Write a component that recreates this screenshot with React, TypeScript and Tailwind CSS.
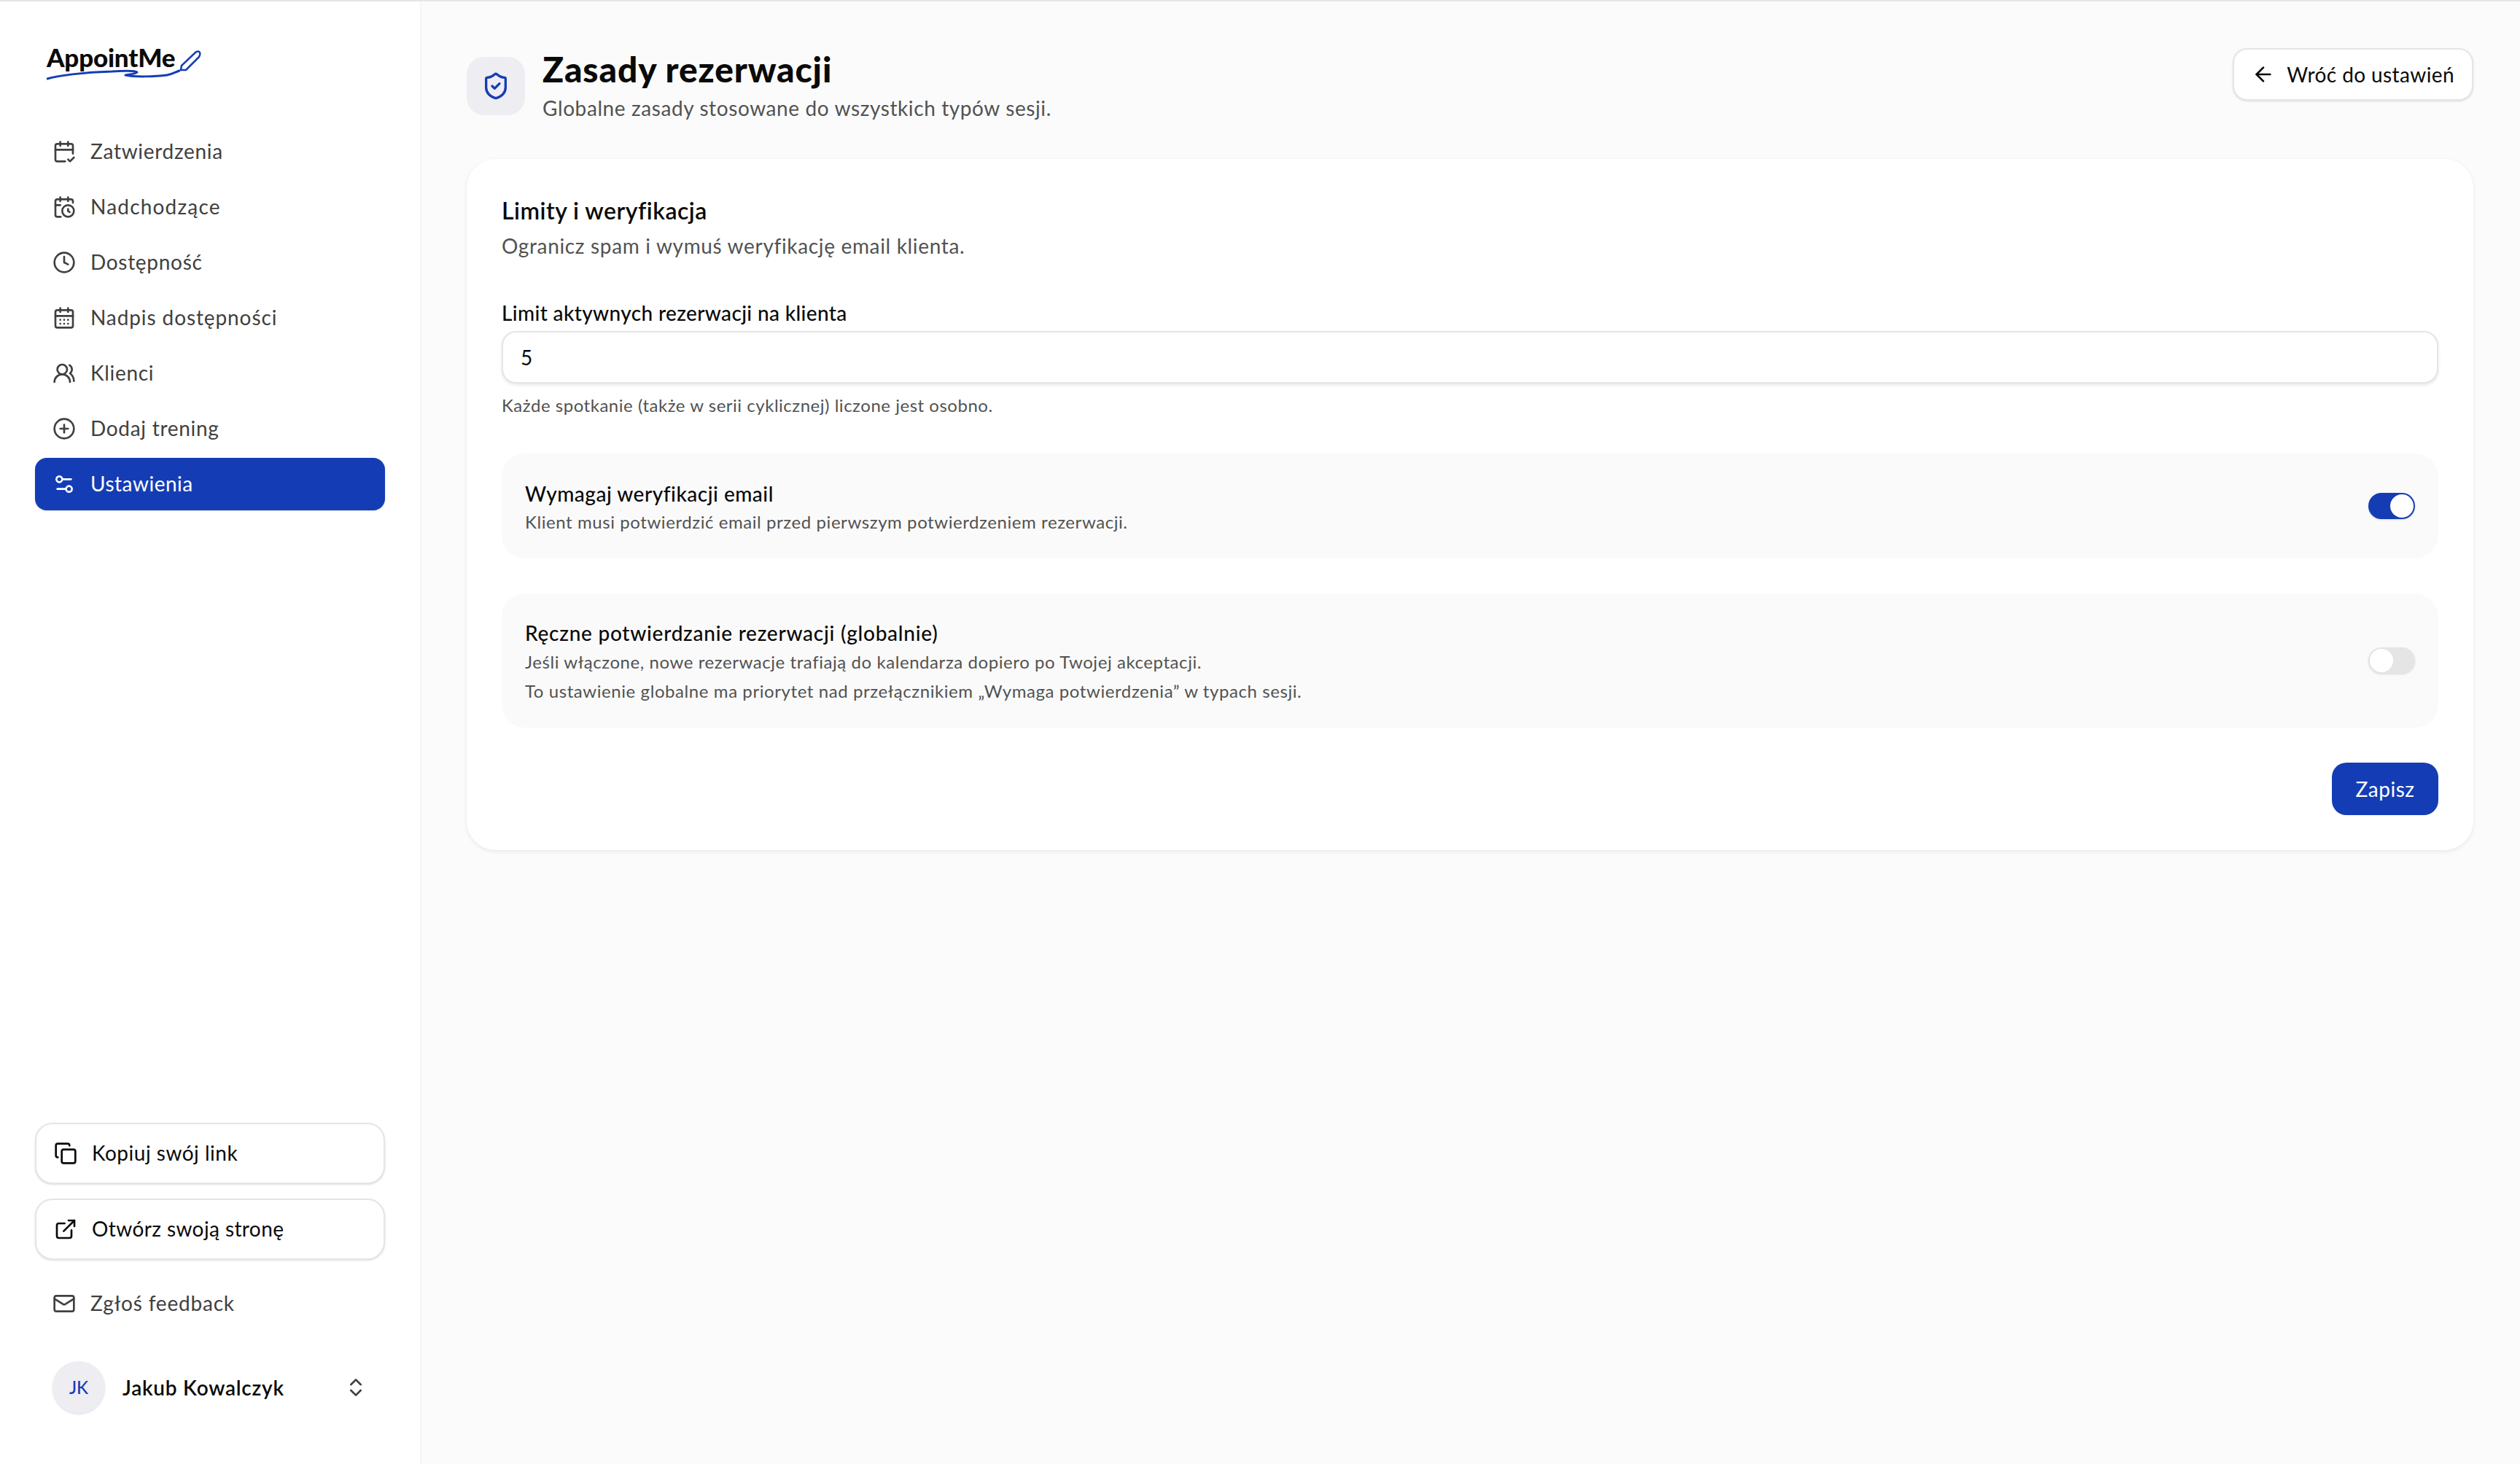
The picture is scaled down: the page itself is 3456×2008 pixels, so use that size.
import React from "react";
import {
  CalendarCheck2,
  CalendarClock,
  Clock,
  CalendarDays,
  UsersRound,
  CirclePlus,
  Settings2,
  Copy,
  ExternalLink,
  Mail,
  ChevronsUpDown,
  ArrowLeft,
  ShieldCheck,
} from "lucide-react";

const font = { fontFamily: '"Lato", "Noto Sans", sans-serif' };

const nav = [
  { label: "Zatwierdzenia", Icon: CalendarCheck2, track: "tracking-[0.7px]" },
  { label: "Nadchodzące", Icon: CalendarClock, track: "tracking-[1.2px]" },
  { label: "Dostępność", Icon: Clock, track: "tracking-[0.7px]" },
  { label: "Nadpis dostępności", Icon: CalendarDays, track: "tracking-[0.9px]" },
  { label: "Klienci", Icon: UsersRound, track: "tracking-[0.7px]" },
  { label: "Dodaj trening", Icon: CirclePlus, track: "tracking-[0.7px]" },
  { label: "Ustawienia", Icon: Settings2, track: "tracking-[0.5px]", active: true },
];

function Logo() {
  return (
    <div className="relative h-[64px] w-[216px]">
      <span className="absolute left-0 top-[-6px] text-[35px] font-black leading-[48px] tracking-[-0.2px] text-[#0a0a0a]">
        AppointMe
      </span>
      <svg className="absolute left-0 top-0" width="216" height="64" viewBox="0 0 216 64" fill="none">
        <path
          d="M1 48C14 44 50 39 90 38C105 37 122 37 124 39C122 42 110 42 108 43C120 46 150 45 165 43C172 42 176 39 182 37"
          stroke="#143db5"
          strokeWidth="3"
          strokeLinecap="round"
          strokeLinejoin="round"
        />
        <path
          d="M184 36L185 30L204 12C206 10 209 10 210 12C211 14 210 16 209 18L191 36L184 36Z"
          stroke="#143db5"
          strokeWidth="2.5"
          strokeLinejoin="round"
        />
      </svg>
    </div>
  );
}

function Toggle({ on }: { on?: boolean }) {
  return (
    <div
      className={
        on
          ? "flex h-[36px] w-[64px] shrink-0 items-center justify-end rounded-full bg-[#143db5] p-[2px] shadow-sm"
          : "flex h-[36px] w-[64px] shrink-0 items-center justify-start rounded-full bg-[#e5e5e5] p-[2px] shadow-sm"
      }
    >
      <div className="h-[32px] w-[32px] rounded-full bg-white" />
    </div>
  );
}

export default function App() {
  return (
    <div style={font} className="flex h-[2008px] w-[3456px] flex-col overflow-hidden bg-[#fbfbfb] text-[#0a0a0a]">
      <div className="h-[2px] w-full shrink-0 bg-[#e5e5e5]" />
      <div className="flex min-h-0 flex-1">
        <aside className="flex w-[578px] shrink-0 flex-col border-r-2 border-[#f5f5f5] bg-white pl-[48px] pr-[48px]">
          <div className="pl-[16px] pt-[58px]">
            <Logo />
          </div>
          <nav className="mt-[48px] flex flex-col gap-[4px]">
            {nav.map(({ label, Icon, active, track }) => (
              <div
                key={label}
                className={
                  active
                    ? "flex h-[72px] items-center gap-[20px] rounded-[16px] bg-[#143db5] px-[24px] text-[28px] text-white shadow-sm"
                    : "flex h-[72px] items-center gap-[20px] rounded-[16px] px-[24px] text-[28px] text-[#404040]"
                }
              >
                <Icon size={32} strokeWidth={2} />
                <span className={track + " -translate-y-px"}>{label}</span>
              </div>
            ))}
          </nav>
          <div className="mt-auto flex flex-col">
            <div className="flex h-[84px] items-center gap-[20px] rounded-[24px] border-2 border-[#e5e5e5] bg-white px-[24px] text-[28px] tracking-[0.5px] shadow-sm">
              <Copy size={32} strokeWidth={2} />
              <span className="-translate-y-px">Kopiuj swój link</span>
            </div>
            <div className="mt-[20px] flex h-[84px] items-center gap-[20px] rounded-[24px] border-2 border-[#e5e5e5] bg-white px-[24px] text-[28px] tracking-[0.4px] shadow-sm">
              <ExternalLink size={32} strokeWidth={2} />
              <span className="-translate-y-px">Otwórz swoją stronę</span>
            </div>
            <div className="mt-[24px] flex h-[72px] items-center gap-[20px] px-[24px] text-[28px] tracking-[0.8px] text-[#404040]">
              <Mail size={32} strokeWidth={2} />
              <span className="-translate-y-px">Zgłoś feedback</span>
            </div>
            <div className="mt-[42px] mb-[68px] flex h-[74px] items-center px-[24px]">
              <div className="flex h-[72px] w-[72px] items-center justify-center rounded-full bg-[#ededf2] text-[24px] font-medium text-[#143db5] shadow-sm">
                JK
              </div>
              <span className="ml-[24px] flex-1 text-[28px] font-semibold tracking-[0.75px]">Jakub Kowalczyk</span>
              <ChevronsUpDown size={32} strokeWidth={2} className="text-[#404040]" />
            </div>
          </div>
        </aside>
        <main className="min-w-0 flex-1 pl-[62px] pr-[64px] pt-[64px]">
          <header className="flex items-start justify-between">
            <div className="flex gap-[24px]">
              <div className="mt-[12px] flex h-[80px] w-[80px] items-center justify-center rounded-[24px] bg-[#ededf2] text-[#143db5]">
                <ShieldCheck size={40} strokeWidth={2} />
              </div>
              <div>
                <h1 className="text-[48px] font-black leading-[58px] tracking-[0.85px]">Zasady rezerwacji</h1>
                <p className="mt-[4px] text-[28px] leading-[40px] tracking-[0.6px] text-[#525252]">
                  Globalne zasady stosowane do wszystkich typów sesji.
                </p>
              </div>
            </div>
            <button className="flex h-[72px] items-center gap-[16px] rounded-[20px] border-2 border-[#e5e5e5] bg-white pl-[24px] pr-[24px] text-[28px] tracking-[0.4px] shadow-sm">
              <ArrowLeft size={32} strokeWidth={2} />
              <span>Wróć do ustawień</span>
            </button>
          </header>
          <section className="mt-[50px] rounded-[40px] bg-white p-[48px] shadow-[0_2px_6px_rgba(0,0,0,0.08)]">
            <h2 className="text-[32px] font-semibold leading-[46px] tracking-[0.5px]">Limity i weryfikacja</h2>
            <p className="mt-[5px] text-[28px] leading-[40px] tracking-[0.66px] text-[#525252]">
              Ogranicz spam i wymuś weryfikację email klienta.
            </p>
            <label className="mt-[52px] block text-[28px] font-medium leading-[40px] tracking-[0.36px]">
              Limit aktywnych rezerwacji na klienta
            </label>
            <div className="mt-[5px] flex h-[72px] items-center rounded-[20px] border-2 border-[#e5e5e5] bg-white px-[24px] text-[28px] shadow-[0_2px_4px_rgba(0,0,0,0.1)]">
              5
            </div>
            <p className="mt-[14px] text-[24px] leading-[32px] tracking-[0.52px] text-[#525252]">
              Każde spotkanie (także w serii cyklicznej) liczone jest osobno.
            </p>
            <div className="mt-[50px] flex h-[144px] items-center justify-between rounded-[32px] bg-[#fafafa] px-[32px]">
              <div>
                <div className="text-[28px] font-medium leading-[40px] tracking-[0.5px]">Wymagaj weryfikacji email</div>
                <div className="mt-[3px] text-[24px] leading-[32px] tracking-[0.57px] text-[#525252]">
                  Klient musi potwierdzić email przed pierwszym potwierdzeniem rezerwacji.
                </div>
              </div>
              <Toggle on />
            </div>
            <div className="mt-[48px] flex h-[184px] items-center justify-between rounded-[32px] bg-[#fafafa] px-[32px]">
              <div className="pt-[4px]">
                <div className="text-[28px] font-medium leading-[40px] tracking-[0.74px]">
                  Ręczne potwierdzanie rezerwacji (globalnie)
                </div>
                <div className="text-[24px] leading-[40px] tracking-[0.57px] text-[#525252]">
                  Jeśli włączone, nowe rezerwacje trafiają do kalendarza dopiero po Twojej akceptacji.
                </div>
                <div className="text-[24px] leading-[40px] tracking-[0.58px] text-[#525252]">
                  To ustawienie globalne ma priorytet nad przełącznikiem „Wymaga potwierdzenia” w typach sesji.
                </div>
              </div>
              <Toggle />
            </div>
            <div className="mt-[48px] flex justify-end">
              <button className="flex h-[72px] w-[146px] items-center justify-center rounded-[20px] bg-[#143db5] text-[28px] tracking-[0.5px] text-white">
                Zapisz
              </button>
            </div>
          </section>
        </main>
      </div>
    </div>
  );
}
